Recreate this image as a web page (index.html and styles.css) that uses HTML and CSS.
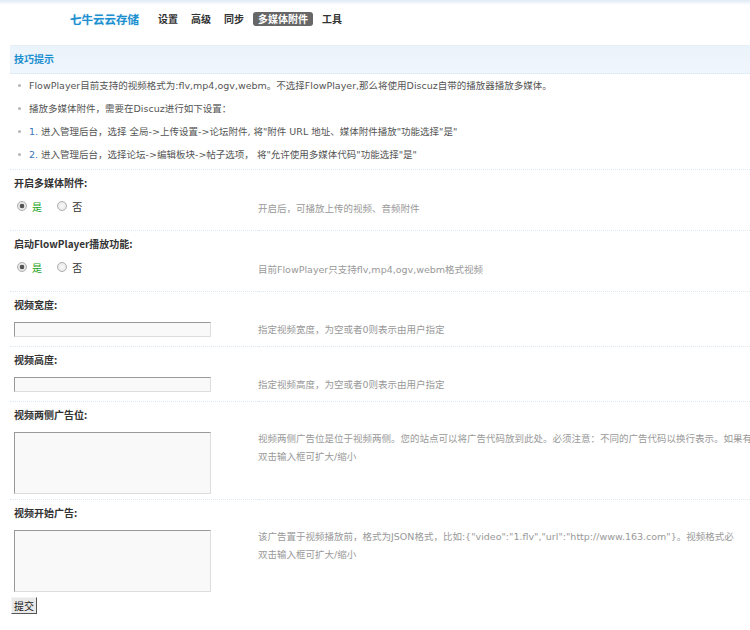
FILE: index.html
```html
<!DOCTYPE html>
<html lang="zh-CN">
<head>
  <meta charset="UTF-8">
  <title>七牛云云存储 - 多媒体附件</title>
  <link rel="stylesheet" href="styles.css">
</head>
<body>
  <div class="topline"></div>
  <div class="header">
    <span class="brand">七牛云云存储</span>
    <ul class="nav">
      <li><a href="#">设置</a></li>
      <li><a href="#">高级</a></li>
      <li><a href="#">同步</a></li>
      <li class="current"><a href="#">多媒体附件</a></li>
      <li><a href="#">工具</a></li>
    </ul>
  </div>

  <div class="wrap">
    <div class="tipbox">
      <h3>技巧提示</h3>
    </div>
    <ul class="tiplist">
      <li>FlowPlayer目前支持的视频格式为:flv,mp4,ogv,webm。不选择FlowPlayer,那么将使用Discuz自带的播放器播放多媒体。</li>
      <li>播放多媒体附件，需要在Discuz进行如下设置：</li>
      <li><span class="num">1.</span> 进入管理后台，选择 全局-&gt;上传设置-&gt;论坛附件, 将"附件 URL 地址、媒体附件播放"功能选择"是"</li>
      <li><span class="num">2.</span> 进入管理后台，选择论坛-&gt;编辑板块-&gt;帖子选项， 将"允许使用多媒体代码"功能选择"是"</li>
    </ul>

    <form class="setform" onsubmit="return false;">
      <table class="tb">
        <colgroup><col class="col-form"><col></colgroup>
        <tr class="label-row"><td colspan="2">开启多媒体附件:</td></tr>
        <tr class="value-row radio-row">
          <td class="rowform">
            <label class="radio"><input type="radio" name="enable" checked> <span class="yes">是</span></label>
            <label class="radio"><input type="radio" name="enable"> <span>否</span></label>
          </td>
          <td class="tips">开启后，可播放上传的视频、音频附件</td>
        </tr>

        <tr class="label-row"><td colspan="2">启动FlowPlayer播放功能:</td></tr>
        <tr class="value-row radio-row">
          <td class="rowform">
            <label class="radio"><input type="radio" name="flow" checked> <span class="yes">是</span></label>
            <label class="radio"><input type="radio" name="flow"> <span>否</span></label>
          </td>
          <td class="tips">目前FlowPlayer只支持flv,mp4,ogv,webm格式视频</td>
        </tr>

        <tr class="label-row"><td colspan="2">视频宽度:</td></tr>
        <tr class="value-row input-row">
          <td class="rowform"><input type="text" class="txt"></td>
          <td class="tips">指定视频宽度，为空或者0则表示由用户指定</td>
        </tr>

        <tr class="label-row"><td colspan="2">视频高度:</td></tr>
        <tr class="value-row input-row">
          <td class="rowform"><input type="text" class="txt"></td>
          <td class="tips">指定视频高度，为空或者0则表示由用户指定</td>
        </tr>

        <tr class="label-row"><td colspan="2">视频两侧广告位:</td></tr>
        <tr class="value-row area-row">
          <td class="rowform"><textarea class="area"></textarea></td>
          <td class="tips">视频两侧广告位是位于视频两侧。您的站点可以将广告代码放到此处。必须注意：不同的广告代码以换行表示。如果有多<br>双击输入框可扩大/缩小</td>
        </tr>

        <tr class="label-row"><td colspan="2">视频开始广告:</td></tr>
        <tr class="value-row area-row last">
          <td class="rowform"><textarea class="area"></textarea></td>
          <td class="tips">该广告置于视频播放前，格式为JSON格式，比如:{"video":"1.flv","url":"http://www.163.com"}。视频格式必<br>双击输入框可扩大/缩小</td>
        </tr>
      </table>
      <button type="submit" class="btn">提交</button>
    </form>
  </div>
</body>
</html>
```

FILE: styles.css
```css
html, body { margin: 0; padding: 0; }
body {
  font-family: "DejaVu Sans", "Noto Sans CJK SC", sans-serif;
  font-size: 10px;
  color: #555;
  background: #fff;
  overflow-x: hidden;
}

.topline { height: 5px; background: linear-gradient(#dfeaf4, #fff); }

/* header / nav */
.header { display: flex; align-items: center; height: 28px; padding-left: 70px; }
.brand {
  font-family: "Noto Sans CJK SC", sans-serif;
  font-size: 11.5px;
  font-weight: bold;
  color: #1b8fcf;
  text-shadow: 0 0 2px #cfe6f5;
  margin-right: 15px;
}
.nav { list-style: none; margin: 0; padding: 0; display: flex; gap: 5px; }
.nav li { display: flex; }
.nav a {
  display: block;
  padding: 0 4px;
  height: 14px;
  line-height: 14px;
  font-family: "Noto Sans CJK SC", sans-serif;
  font-weight: bold;
  font-size: 10px;
  color: #333;
  text-decoration: none;
  border-radius: 3px;
}
.nav .current a { background: #676767; color: #fff; padding: 0 5px; }

.wrap { padding: 0 0 0 10px; margin-top: 12px; }

/* tips */
.tipbox {
  height: 27px;
  background: linear-gradient(#ebf3fb, #f0f6fd);
  border-top: 1px solid #e6eff8;
  border-bottom: 1px dotted #d8e3ee;
}
.tipbox h3 {
  margin: 0;
  padding-left: 4px;
  line-height: 26px;
  font-size: 10px;
  color: #1b8fcf;
  font-family: "Noto Sans CJK SC", sans-serif;
}
.tiplist {
  list-style: none;
  margin: 0;
  padding: 0 0 3px 0;
  border-bottom: 1px dotted #dce8f3;
  font-size: 9.5px;
}
.tiplist li {
  position: relative;
  line-height: 23px;
  padding-left: 19px;
  white-space: nowrap;
  color: #555;
}
.tiplist li::before {
  content: "";
  position: absolute;
  left: 8px;
  top: 10px;
  width: 3px;
  height: 3px;
  border-radius: 50%;
  background: #b5b5b5;
}
.tiplist .num { color: #3a76b8; }

/* form table */
.tb { border-collapse: collapse; width: 100%; table-layout: fixed; }
.col-form { width: 248px; }
.tb td { padding: 0; vertical-align: top; }
.label-row td {
  padding: 6px 0 4px 4px;
  line-height: 14px;
  font-weight: bold;
  color: #333;
  font-family: "Noto Sans CJK SC", sans-serif;
}
.value-row td { border-bottom: 1px dotted #dde7ef; }
.value-row.last td { border-bottom: none; }
.rowform { padding: 6px 0 0 4px !important; }
.tips {
  color: #999;
  white-space: nowrap;
  overflow: visible;
  font-size: 9.5px;
  line-height: 14px;
}
.radio-row .rowform { height: 30px; }
.radio-row .tips { padding-top: 8px; }
.input-row .rowform { height: 24px; }
.input-row .tips { padding-top: 7px; }
.area-row .rowform { height: 67px; }
.area-row .tips { padding-top: 4px; line-height: 18px; }

.radio { display: inline-flex; align-items: center; height: 12px; margin: 0 9px 0 3px; color: #333; }
.radio input {
  appearance: none;
  -webkit-appearance: none;
  width: 10px;
  height: 10px;
  margin: 0 5px 0 0;
  border: 1px solid #b0b0b0;
  border-radius: 50%;
  background: radial-gradient(circle, #fafafa, #e2e2e2);
  box-sizing: border-box;
}
.radio input:checked { background: radial-gradient(circle, #555 0 2px, #e6e6e6 2.6px); }
.radio .yes { color: #1aa31a; }

.txt, .area {
  display: block;
  box-sizing: border-box;
  width: 197px;
  margin: 0;
  padding: 0;
  background: #f9f9f9;
  border: 1px solid #ddd;
  border-top-color: #999;
  border-left-color: #999;
  font: inherit;
}
.txt { height: 15px; }
.area { height: 62px; resize: none; }

.btn {
  display: block;
  margin: 0 0 0 1px;
  height: 17px;
  width: 26px;
  padding: 0;
  font-family: "Noto Sans CJK SC", sans-serif;
  font-size: 10px;
  color: #222;
  background: #e9e9e9;
  border: 1px solid;
  border-color: #f4f4f4 #555 #555 #f4f4f4;
}
```
